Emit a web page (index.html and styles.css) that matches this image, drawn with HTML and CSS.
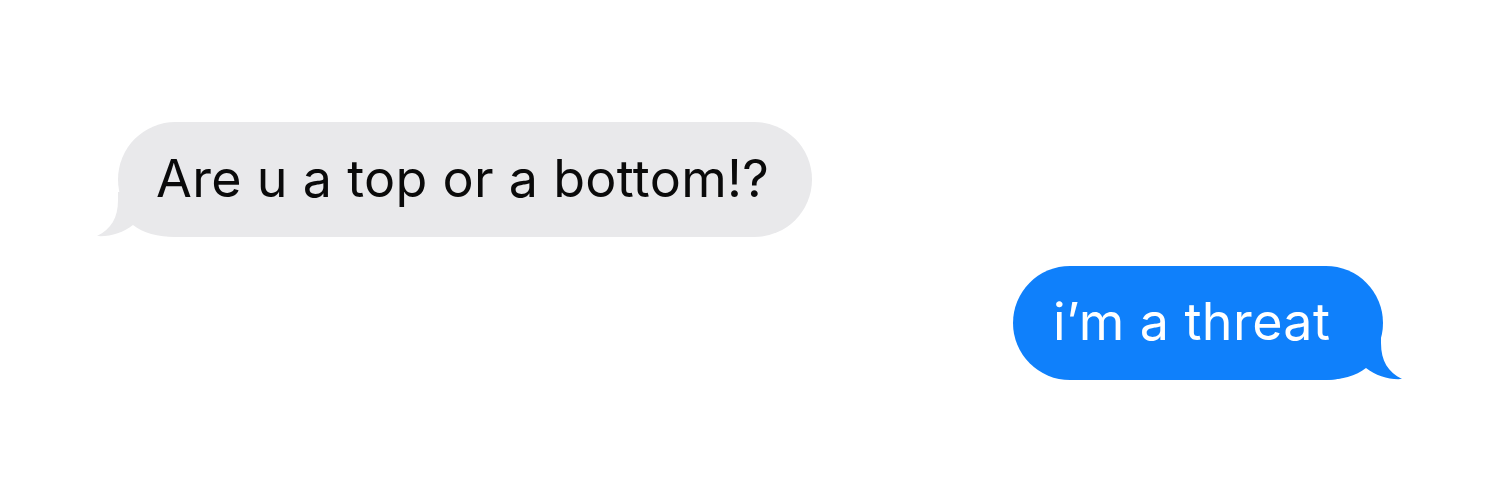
FILE: index.html
```html
<!DOCTYPE html>
<html lang="en">
<head>
    <meta charset="UTF-8">
    <meta name="viewport" content="width=device-width, initial-scale=1.0">
    <title>Messages</title>
    <link rel="stylesheet" href="styles.css">
</head>
<body>
    <main class="thread">
        <div class="bubble them">
            <p class="texto">Are u a top or a bottom!?</p>
            <svg class="tail" width="80" height="45" viewBox="0 0 80 45" aria-hidden="true">
                <path d="M21,0 L21,8 C21,26 14,37 0,44 C12,45 26,41 36,33 C46,41 60,45 80,45 L80,0 Z"/>
            </svg>
        </div>
        <div class="bubble me">
            <p class="texto">i’m a threat</p>
            <svg class="tail" width="80" height="45" viewBox="0 0 80 45" aria-hidden="true">
                <path d="M21,0 L21,8 C21,26 14,37 0,44 C12,45 26,41 36,33 C46,41 60,45 80,45 L80,0 Z"/>
            </svg>
        </div>
    </main>
</body>
</html>
```

FILE: styles.css
```css
body{
    margin: 0;
    background-color: #ffffff;
    font-family: Inter, "Liberation Sans", sans-serif;
}
/*la conversacion completa*/
.thread{
    display: flex;
    flex-direction: column;
    gap: 29px;
    padding: 122px 116px 0 118px;
}
.bubble{
    position: relative;
    box-sizing: border-box;
    height: 115px;
    border-radius: 58px;
    display: flex;
    align-items: center;
}
.texto{
    margin: 0;
    padding-bottom: 2px;
    font-size: 52px;
    letter-spacing: 0.3px;
    line-height: 1;
    position: relative;
    z-index: 1;
}
.tail{
    position: absolute;
    bottom: 0;
}
/*mensaje recibido (gris, a la izquierda)*/
.them{
    align-self: flex-start;
    width: 694px;
    padding-left: 38px;
    background-color: #e9e9eb;
    color: #0a0a0a;
}
.them .tail{
    left: -21px;
    fill: #e9e9eb;
}
/*mensaje enviado (azul, a la derecha)*/
.me{
    align-self: flex-end;
    width: 370px;
    height: 114px;
    padding-left: 40px;
    background-color: #0f80fb;
    color: #ffffff;
}
.me .texto{
    letter-spacing: 0.4px;
}
.me .tail{
    right: -19px;
    fill: #0f80fb;
    transform: scaleX(-1);
}
```
